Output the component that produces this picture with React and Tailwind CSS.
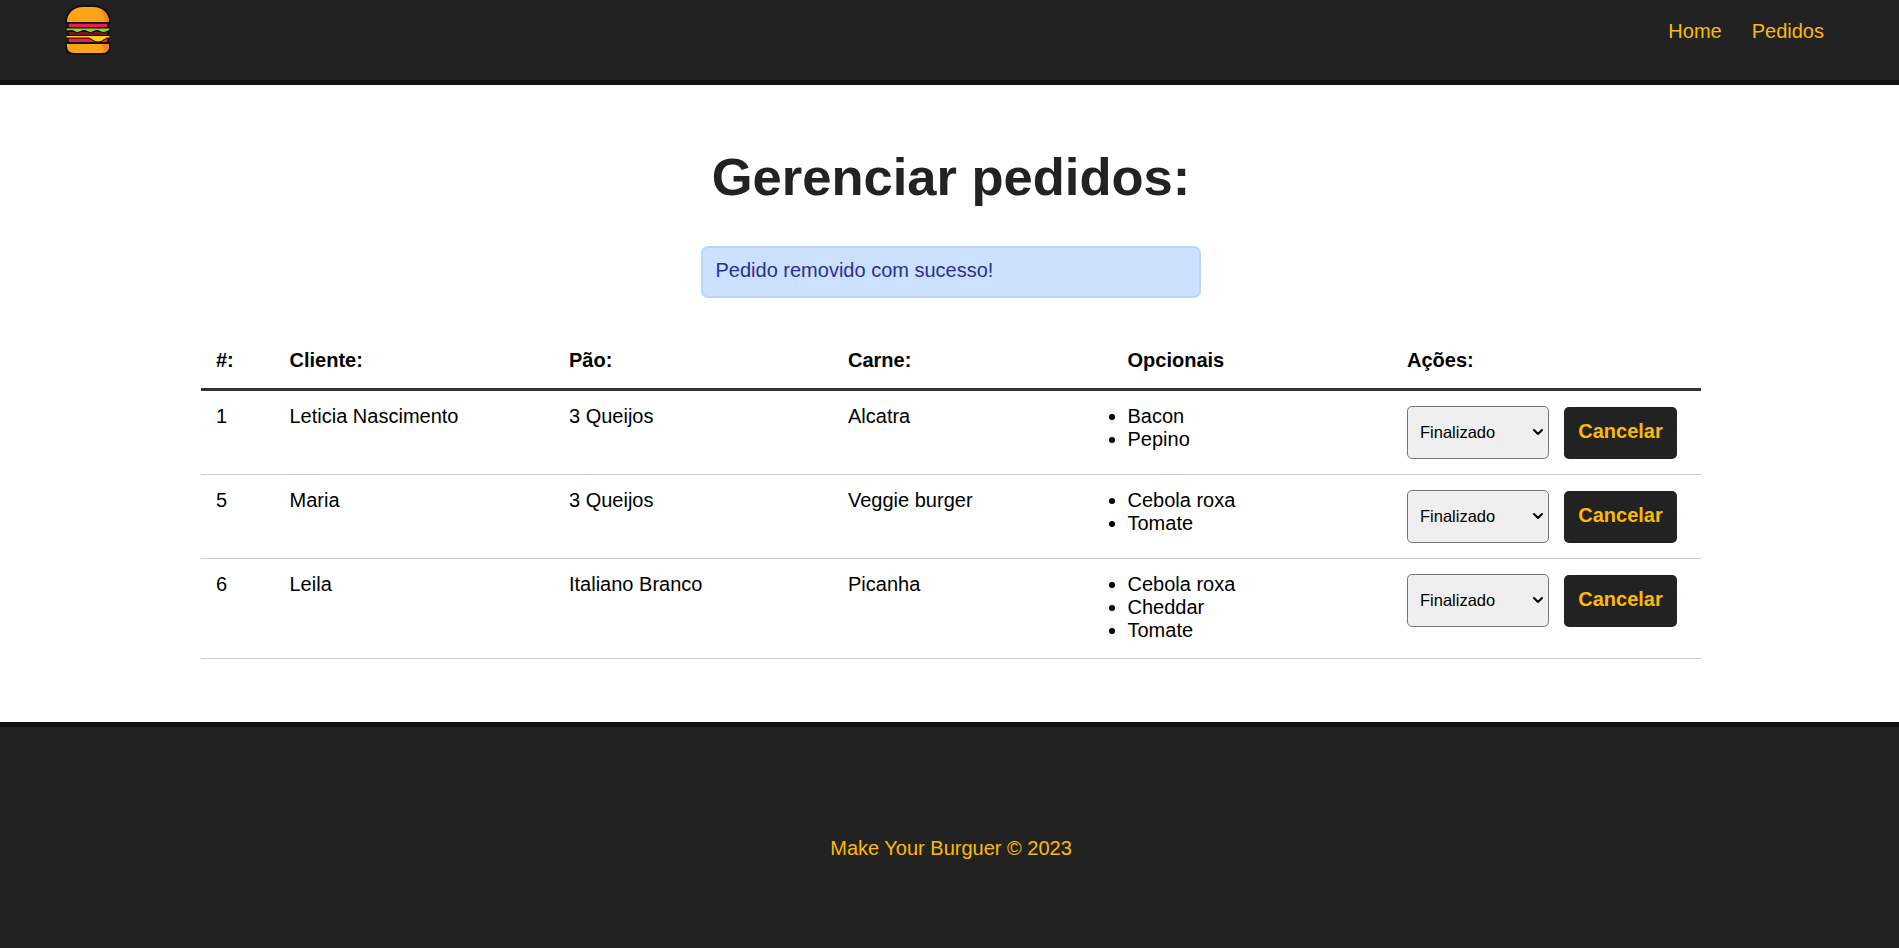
import React from "react";
import { ChevronDown } from "lucide-react";

const pedidos = [
  { id: 1, cliente: "Leticia Nascimento", pao: "3 Queijos", carne: "Alcatra", opcionais: ["Bacon", "Pepino"] },
  { id: 5, cliente: "Maria", pao: "3 Queijos", carne: "Veggie burger", opcionais: ["Cebola roxa", "Tomate"] },
  { id: 6, cliente: "Leila", pao: "Italiano Branco", carne: "Picanha", opcionais: ["Cebola roxa", "Cheddar", "Tomate"] },
];

const gridCols = "grid grid-cols-[73.5px_279.5px_279px_279.5px_279.5px_1fr]";

const BurgerLogo = () => (
  <svg viewBox="0 0 50 50" className="h-[50px] w-[50px]">
    {/* pão de cima */}
    <path d="M3 17C3 7 11 1 20 1h10c9 0 17 6 17 16v1H3z" fill="#faa41a" stroke="#111" strokeWidth="2" strokeLinejoin="round" />
    <path d="M36 3c6 3 10 8 10 14h-4c0-6-2-10-6-14z" fill="#f7851e" />
    {/* tomate */}
    <rect x="5" y="18" width="40" height="5" fill="#ee1c4e" stroke="#111" strokeWidth="1.5" />
    {/* carne */}
    <rect x="5" y="26" width="40" height="5" fill="#7a1420" stroke="#111" strokeWidth="1.5" />
    {/* alface */}
    <path d="M3 23h44v2.500c-3 0-3 2-6.500 2s-3.500-2-6.500-2-3.500 2-6.500 2-3.500-2-6.500-2-3.500 2-6.500 2-3.500-2-6-2-2 1-5.500 0z" fill="#8bd43a" stroke="#111" strokeWidth="1.2" />
    {/* tomate de baixo */}
    <rect x="5" y="32" width="40" height="6" fill="#ee1c4e" stroke="#111" strokeWidth="1.5" />
    {/* queijo */}
    <path d="M3 30.500h44V33H44l-6 3.500q-3 1-6 0L26 33H3z" fill="#fcd116" stroke="#111" strokeWidth="1" />
    {/* pão de baixo */}
    <path d="M3 38h44v3c0 5-3 8-8 8H11c-5 0-8-3-8-8z" fill="#faa41a" stroke="#111" strokeWidth="2" strokeLinejoin="round" />
    <path d="M39 39h7v2c0 4-2 6-5 7 0-3-1-6-2-9z" fill="#f7851e" />
  </svg>
);

export default function App() {
  return (
    <div className="flex min-h-[948px] flex-col bg-white font-['Liberation_Sans',Arial,sans-serif] text-[20px] text-black">
      <nav className="flex h-[85px] items-start justify-between border-b-[5px] border-[#111] bg-[#222] pt-[5px] pl-[63px] pr-[75px]">
        <a href="#" className="block">
          <BurgerLogo />
        </a>
        <div className="mt-[15px] flex gap-[30px] leading-[23px] text-[#fcba03]">
          <a href="#">Home</a>
          <a href="#">Pedidos</a>
        </div>
      </nav>

      <main className="flex flex-1 flex-col items-center pl-[3px]">
        <h1 className="mt-[61px] text-[52.5px] leading-[62px] font-bold text-[#222]">Gerenciar pedidos:</h1>
        <div className="mt-[38px] h-[52px] w-[500px] rounded-[7px] border-2 border-[#b8d6fe] bg-[#cce0ff] pl-[12.5px] pt-[11px] leading-[23px] text-[#2b2f8f]">
          Pedido removido com sucesso!
        </div>

        <div className="mt-[35px] w-[1500px]">
          <div className={`${gridCols} h-[58px] items-center border-b-[3px] border-[#333] pb-[2px] font-bold`}>
            <div className="pl-[15px]">#:</div>
            <div className="pl-[15px]">Cliente:</div>
            <div className="pl-[15px]">Pão:</div>
            <div className="pl-[15px]">Carne:</div>
            <div className="pl-[15px]">Opcionais</div>
            <div className="pl-[15px]">Ações:</div>
          </div>
          {pedidos.map((p) => (
            <div key={p.id} className={`${gridCols} border-b border-[#ccc] py-[15px] leading-[23px]`}>
              <div className="-mt-[1px] pl-[15px]">{p.id}</div>
              <div className="-mt-[1px] pl-[15px]">{p.cliente}</div>
              <div className="-mt-[1px] pl-[15px]">{p.pao}</div>
              <div className="-mt-[1px] pl-[15px]">{p.carne}</div>
              <ul className="-mt-[1px] mb-[1px] list-disc pl-[15px]">
                {p.opcionais.map((o) => (
                  <li key={o}>{o}</li>
                ))}
              </ul>
              <div className="flex items-end gap-[15px] self-start pl-[15px]">
                <div className="relative">
                  <select className="block h-[53px] w-[142px] appearance-none rounded-[5px] border border-[#767676] bg-[#efefef] pb-[1px] pl-[12px] text-[16.5px]" defaultValue="Finalizado">
                    <option>Finalizado</option>
                    <option>Em produção</option>
                    <option>Solicitado</option>
                  </select>
                  <ChevronDown className="pointer-events-none absolute top-[18px] left-[123px] h-[16px] w-[16px]" strokeWidth={3} />
                </div>
                <button className="h-[52px] w-[113px] rounded-[5px] bg-[#222] pb-[3px] text-[20px] font-bold text-[#fcba03]">Cancelar</button>
              </div>
            </div>
          ))}
        </div>
      </main>

      <footer className="flex h-[226px] items-center justify-center border-t-[5px] border-[#111] bg-[#222] pt-[21px] pl-[3px] text-[#fcba03]">
        Make Your Burguer © 2023
      </footer>
    </div>
  );
}
